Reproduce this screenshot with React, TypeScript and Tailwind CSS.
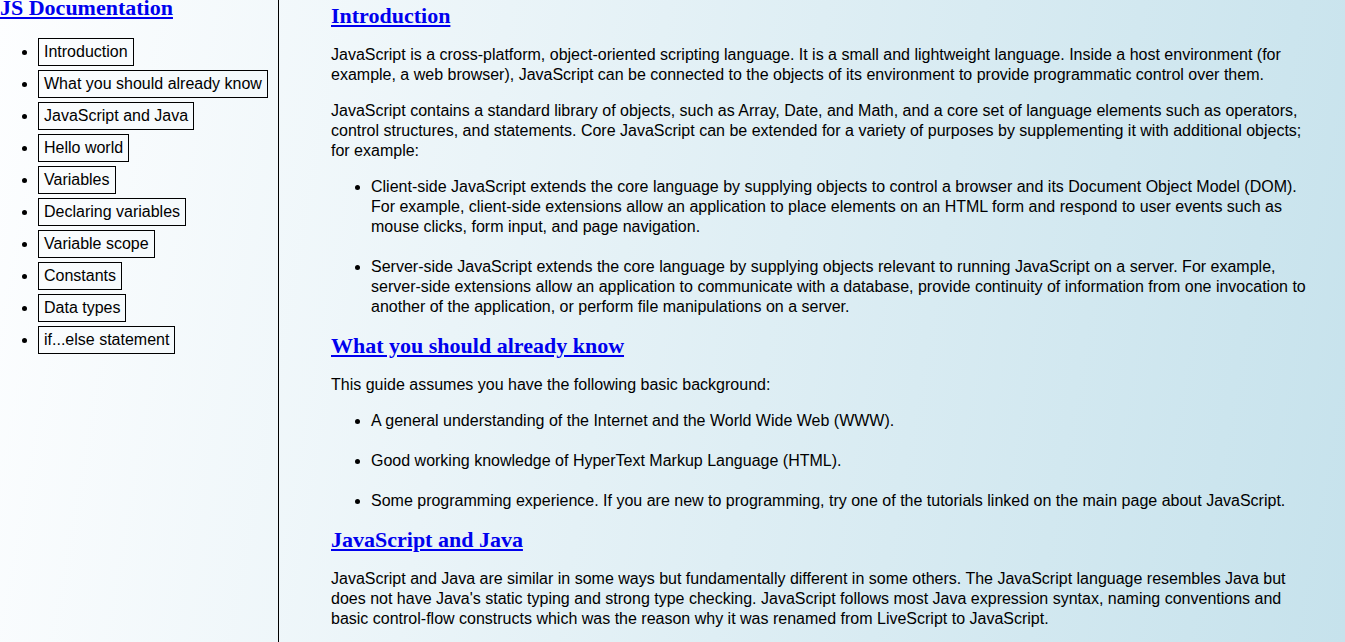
const navItems = [
  'Introduction',
  'What you should already know',
  'JavaScript and Java',
  'Hello world',
  'Variables',
  'Declaring variables',
  'Variable scope',
  'Constants',
  'Data types',
  'if...else statement',
];

const sections = [
  {
    title: 'Introduction',
    blocks: [
      {
        p: 'JavaScript is a cross-platform, object-oriented scripting language. It is a small and lightweight language. Inside a host environment (for example, a web browser), JavaScript can be connected to the objects of its environment to provide programmatic control over them.',
      },
      {
        p: 'JavaScript contains a standard library of objects, such as Array, Date, and Math, and a core set of language elements such as operators, control structures, and statements. Core JavaScript can be extended for a variety of purposes by supplementing it with additional objects; for example:',
      },
      {
        list: [
          'Client-side JavaScript extends the core language by supplying objects to control a browser and its Document Object Model (DOM). For example, client-side extensions allow an application to place elements on an HTML form and respond to user events such as mouse clicks, form input, and page navigation.',
          'Server-side JavaScript extends the core language by supplying objects relevant to running JavaScript on a server. For example, server-side extensions allow an application to communicate with a database, provide continuity of information from one invocation to another of the application, or perform file manipulations on a server.',
        ],
      },
    ],
  },
  {
    title: 'What you should already know',
    blocks: [
      { p: 'This guide assumes you have the following basic background:' },
      {
        list: [
          'A general understanding of the Internet and the World Wide Web (WWW).',
          'Good working knowledge of HyperText Markup Language (HTML).',
          'Some programming experience. If you are new to programming, try one of the tutorials linked on the main page about JavaScript.',
        ],
      },
    ],
  },
  {
    title: 'JavaScript and Java',
    blocks: [
      {
        p: "JavaScript and Java are similar in some ways but fundamentally different in some others. The JavaScript language resembles Java but does not have Java's static typing and strong type checking. JavaScript follows most Java expression syntax, naming conventions and basic control-flow constructs which was the reason why it was renamed from LiveScript to JavaScript.",
      },
      {
        p: "In contrast to Java's compile-time system of classes built by declarations, JavaScript supports a runtime system based on a small number of data types representing numeric, Boolean, and string values.",
      },
    ],
  },
];

export default function App() {
  return (
    <div className="flex h-screen w-full overflow-hidden bg-[linear-gradient(100deg,#fdfeff_0%,#eaf4f8_35%,#c6e2ec_100%)] font-['Liberation_Sans',Arial,sans-serif] text-[16px] text-black">
      <nav className="h-full w-[279px] shrink-0 border-r border-black">
        <header className="h-[15px] font-['Liberation_Serif','Times_New_Roman',serif] text-[22px] font-bold leading-[15px]">
          <a href="#" className="text-[#0000ee] underline">
            JS Documentation
          </a>
        </header>
        <ul className="mt-[23px] list-disc pl-[38px]">
          {navItems.map((item) => (
            <li key={item} className="h-[32px] leading-[24px]">
              <a
                href="#"
                className="inline-block border border-black px-[5px] py-[4px] leading-[18px] text-black"
              >
                {item}
              </a>
            </li>
          ))}
        </ul>
      </nav>

      <main className="min-w-0 flex-1 pl-[52px] pr-[32px] pt-[4px]">
        {sections.map((section, i) => (
          <section key={section.title} className={i === 0 ? '' : 'mt-[17px]'}>
            <header className="h-[24px] font-['Liberation_Serif','Times_New_Roman',serif] text-[22px] font-bold leading-[24px]">
              <a href="#" className="text-[#0000ee] underline">
                {section.title}
              </a>
            </header>
            {section.blocks.map((block, j) =>
              block.p ? (
                <p key={j} className={`${j === 0 ? 'mt-[17px]' : 'mt-[16px]'} leading-[20px]`}>
                  {block.p}
                </p>
              ) : (
                <ul
                  key={j}
                  className={`${j === 0 ? 'mt-[17px]' : 'mt-[16px]'} list-disc space-y-[20px] pl-[40px] leading-[20px]`}
                >
                  {block.list!.map((li) => (
                    <li key={li}>{li}</li>
                  ))}
                </ul>
              )
            )}
          </section>
        ))}
      </main>
    </div>
  );
}
